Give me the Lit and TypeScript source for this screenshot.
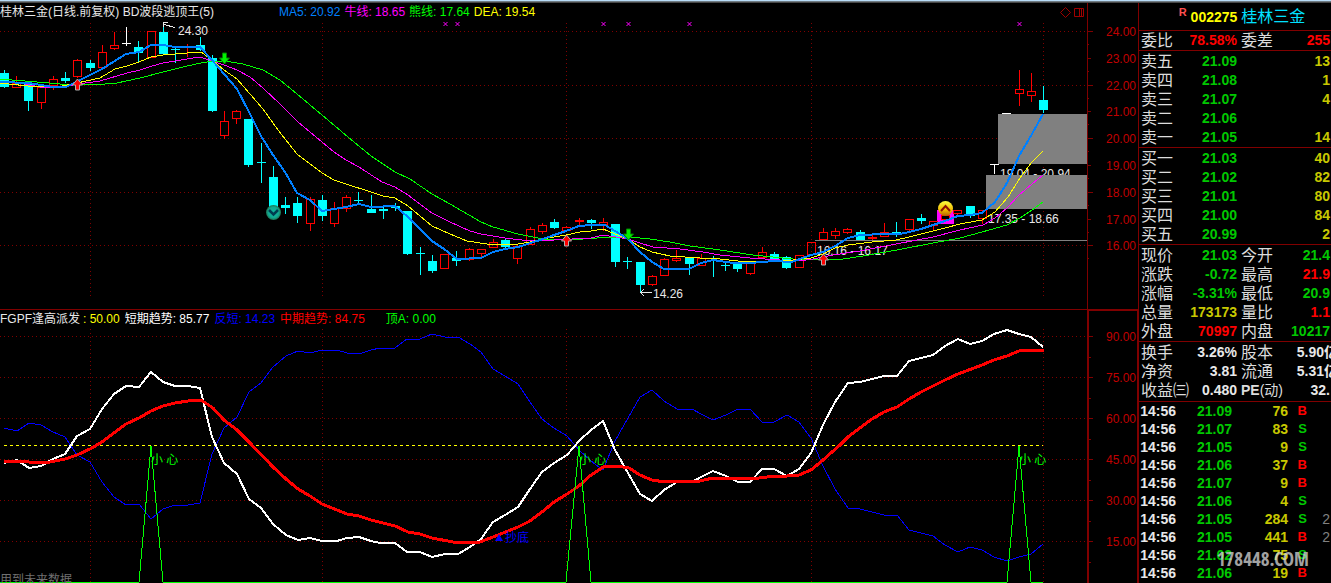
import { LitElement, html, svg, css } from "lit";
import { customElement } from "lit/decorators.js";

type Pt = [number, number];
// kind: u = hollow up bar, d = filled down bar, n = neutral bar
type Candle = [kind: "u" | "d" | "n", high: number, top: number, bottom: number, low: number];

const barX = (i: number) => Math.round(4 + 12.224 * i);
const pts = (list: Pt[]) => list.map((p) => p.join(",")).join(" ");

const parse = (s: string): Pt[] =>
  s.trim().split(/\s+/).map((p) => p.split(",").map(Number) as Pt);

const CANDLES: Candle[] = [
  ["d", 70, 73, 87, 88], ["u", 76, 83, 88, 88], ["d", 82, 84, 101, 111], ["u", 86, 87, 103, 109],
  ["u", 76, 79, 86, 90], ["d", 72, 78, 81, 83], ["u", 59, 60, 77, 78], ["d", 60, 63, 68, 71],
  ["u", 45, 52, 68, 69], ["u", 32, 45, 49, 50], ["n", 27, 43, 44, 46], ["d", 41, 47, 53, 63],
  ["u", 31, 31, 58, 58], ["d", 26, 32, 54, 54], ["d", 46, 49, 50, 63], ["u", 44, 47, 48, 57],
  ["d", 37, 45, 50, 51], ["d", 55, 58, 111, 112], ["u", 111, 121, 136, 139], ["u", 110, 111, 119, 124],
  ["d", 119, 119, 165, 167], ["d", 143, 162, 163, 183], ["d", 166, 177, 213, 213], ["d", 197, 205, 208, 214],
  ["d", 197, 203, 216, 223], ["u", 197, 199, 224, 231], ["d", 195, 200, 216, 221], ["u", 202, 208, 224, 227],
  ["u", 195, 197, 209, 212], ["d", 192, 200, 201, 204], ["d", 195, 209, 213, 213], ["d", 207, 209, 211, 219],
  ["d", 203, 206, 208, 211], ["d", 211, 211, 254, 255], ["d", 247, 253, 254, 275], ["d", 255, 261, 271, 273],
  ["u", 254, 254, 269, 269], ["d", 251, 258, 261, 266], ["u", 248, 249, 260, 261], ["u", 249, 249, 254, 257],
  ["u", 239, 242, 248, 248], ["d", 239, 240, 247, 248], ["u", 244, 246, 259, 264], ["u", 227, 229, 245, 245],
  ["u", 223, 225, 232, 234], ["d", 219, 222, 228, 229], ["u", 226, 227, 231, 231], ["u", 218, 220, 222, 226],
  ["d", 219, 220, 223, 229], ["u", 218, 222, 225, 231], ["d", 224, 224, 262, 267], ["d", 257, 261, 262, 269],
  ["d", 262, 262, 285, 293], ["u", 275, 276, 285, 286], ["u", 258, 259, 276, 276], ["u", 250, 258, 261, 262],
  ["d", 258, 258, 264, 275], ["u", 254, 258, 266, 266], ["d", 256, 260, 261, 277], ["d", 262, 265, 266, 271],
  ["d", 262, 264, 269, 272], ["u", 262, 262, 274, 275], ["u", 247, 252, 258, 258], ["d", 252, 254, 260, 260],
  ["d", 256, 257, 268, 269], ["u", 255, 255, 268, 268], ["u", 242, 242, 255, 255], ["u", 228, 232, 240, 240],
  ["u", 228, 231, 236, 239], ["u", 228, 229, 233, 234], ["d", 230, 232, 240, 240], ["u", 235, 237, 239, 240],
  ["u", 223, 232, 237, 237], ["d", 222, 232, 233, 237], ["u", 219, 219, 230, 232], ["d", 214, 218, 221, 224],
  ["u", 221, 221, 226, 231], ["u", 215, 215, 220, 220], ["u", 210, 210, 214, 216], ["d", 206, 206, 216, 218],
  ["u", 210, 210, 219, 224], ["n", 164, 164, 165, 174], ["n", 113, 113, 114, 114], ["u", 70, 89, 94, 106],
  ["u", 73, 91, 96, 102], ["d", 86, 100, 110, 113],
];

const MA_BLUE = parse(`0,82 29,83 53,87 66,87 78,81 102,69 126,54 139,52 151,45 163,45 175,47 200,47 212,60 237,89 249,112 261,136 273,155 285,172 297,193 310,200 322,211 334,209 346,207 359,204 371,207 395,206 408,217 432,241 444,249 457,259 481,258 493,252 505,249 518,247 540,240 554,235 566,231 579,226 591,225 605,225 615,231 628,239 640,252 652,262 664,269 689,269 701,263 713,260 720,261 733,263 750,263 774,261 792,262 800,259 811,255 823,252 835,246 848,238 860,235 884,234 900,234 909,232 921,229 933,225 945,221 958,216 970,215 982,213 995,202 1007,183 1019,156 1032,134 1043,114`);
const MA_YELLOW = parse(`0,83 37,87 62,86 77,83 100,78 115,69 127,66 139,62 151,57 163,55 187,53 201,52 212,60 224,70 237,79 250,94 263,109 278,130 297,154 322,173 334,180 346,184 371,192 383,196 395,198 408,206 432,226 450,234 467,241 487,244 518,244 530,242 542,239 566,235 580,232 591,231 603,229 615,234 628,239 640,247 652,252 670,256 700,258 720,259 747,262 793,260 811,258 823,254 835,248 848,245 872,242 896,240 909,237 933,231 945,228 960,224 982,220 995,212 1008,197 1020,178 1032,162 1043,151`);
const MA_PINK = parse(`0,81 20,83 40,87 63,87 78,84 100,81 127,73 140,70 152,66 163,63 187,59 200,57 212,61 224,65 237,70 250,77 263,88 280,104 298,122 322,142 334,152 346,160 359,167 382,182 395,187 408,195 432,213 450,222 470,231 481,234 505,238 530,241 554,240 591,238 603,235 628,239 640,243 653,247 680,249 703,252 720,255 750,258 780,260 800,261 813,259 833,255 860,251 896,244 933,237 960,230 983,225 995,218 1007,208 1018,196 1032,184 1043,175`);
const MA_GREEN = parse(`0,79 37,82 60,84 93,85 117,83 140,78 167,71 187,66 201,63 213,61 225,61 243,64 263,70 280,80 297,94 322,115 348,137 371,156 395,172 410,179 432,194 450,204 481,222 493,227 518,234 543,239 570,240 597,238 630,237 650,239 670,242 690,246 720,250 753,255 793,259 843,259 863,256 897,250 933,243 960,238 982,232 1007,225 1020,218 1032,210 1043,202`);

const SHORT_TREND = parse(`4,463 17,460 29,468 41,466 53,459 65,454 77,436 90,429 102,409 114,394 126,386 139,387 151,372 163,382 175,386 188,386 200,388 212,437 224,463 237,474 249,499 261,508 273,524 286,535 298,540 310,538 322,541 337,541 347,538 359,537 371,541 380,543 395,543 407,552 420,552 432,557 445,554 458,554 470,547 481,539 493,522 505,515 518,507 530,489 542,472 554,463 567,455 579,441 591,430 603,421 615,450 628,473 640,494 652,501 664,490 677,482 692,482 701,477 713,471 726,476 738,482 750,482 762,469 774,469 787,476 799,469 811,453 823,425 835,402 848,383 860,382 872,379 884,376 897,376 909,361 921,358 933,355 945,346 958,339 970,344 982,341 994,334 1007,330 1019,334 1031,337 1043,347`);
// The inverse series is the short trend mirrored about the level of 50.
const INVERSE = SHORT_TREND.map(([x, y]): Pt => [x, 891 - y]);
const MID_TREND = parse(`4,461 17,461 29,462 50,462 65,459 77,455 90,449 102,442 114,433 126,424 139,418 151,411 163,406 175,403 188,401 201,400 213,408 224,420 237,430 249,442 273,467 286,479 298,489 310,496 322,504 347,514 359,516 371,520 395,526 408,532 420,534 432,538 453,542 480,542 493,537 518,527 530,521 542,512 554,502 567,494 579,486 591,475 605,466 617,466 629,468 640,475 652,480 665,482 677,481 700,481 713,478 726,478 752,479 774,476 787,476 799,475 811,470 823,460 840,445 848,437 860,428 872,419 884,412 897,407 909,399 921,392 945,380 958,374 982,365 994,360 1007,356 1019,351 1030,350 1044,350`);
const PEAKS = parse(`0,582 139,582 151,446 163,582 566,582 579,446 591,582 1007,582 1019,446 1031,582 1043,582`);

const PRICE_AXIS = [24, 23, 22, 21, 20, 19, 18, 17, 16].map((v, i) => ({
  label: v.toFixed(2), y: Math.round(31 + i * 26.8), major: v % 2 === 0,
}));
const OSC_AXIS = [90, 75, 60, 45, 30, 15].map((v, i) => ({ label: v.toFixed(2), y: 336 + i * 41 }));
const MONTHS = [90, 322, 566, 811, 1043];

const candle = ([kind, high, top, bottom, low]: Candle, i: number) => {
  const x = barX(i);
  const flat = bottom - top <= 2;
  if (kind === "u" && !flat) {
    return svg`<g class="up">
      ${high < top ? svg`<path d="M${x + 0.5} ${high}V${top}"/>` : ""}
      ${low > bottom ? svg`<path d="M${x + 0.5} ${bottom}V${low}"/>` : ""}
      <rect x=${x - 3.5} y=${top + 0.5} width="8" height=${bottom - top - 1}/></g>`;
  }
  return svg`<g class=${kind === "u" ? "solid-up" : kind === "d" ? "down" : "neutral"}>
    <rect x=${x - 4} y=${top} width="9" height=${Math.max(1, bottom - top)}/>
    <rect x=${x} y=${high} width="1" height=${low - high}/></g>`;
};

const buyArrow = (x: number, y: number) => svg`
  <path class="buy" d="M${x + 0.5} ${y}l5 6h-3v5h-4v-5h-3z"/>`;
const sellArrow = (x: number, y: number) => svg`
  <path class="sell" d="M${x - 1.5} ${y}h4v5h3l-5 6l-5 -6h3z"/>`;
const cross = (x: number) => svg`<path class="cross" d="M${x - 1.5} 22l4 4M${x + 2.5} 22l-4 4"/>`;

@customElement("price-chart")
class PriceChart extends LitElement {
  static styles = css`
    :host { display: block; }
    svg { display: block; width: 100%; height: auto; }
    text { font: 12px "Liberation Sans", "Noto Sans CJK SC", sans-serif; fill: #e8e8e8; }
    .crisp { shape-rendering: crispEdges; }
    .grid { stroke: #800000; stroke-dasharray: 1 3; fill: none; }
    .frame { stroke: #800000; fill: none; }
    .axis { fill: #c00000; text-anchor: end; }
    .up { stroke: #ff0000; fill: none; }
    .solid-up { fill: #ff0000; }
    .down { fill: #00ffff; }
    .neutral { fill: #ffffff; }
    .zone { fill: #808080; }
    .ma { fill: none; stroke-width: 1; }
    .thick { stroke: #0080ff; stroke-width: 2; }
    .yellow { stroke: #ffff00; }
    .pink { stroke: #ff00ff; }
    .green { stroke: #00ff00; }
    .buy { fill: #ff0000; stroke: #b0b0b0; }
    .sell { fill: #00f000; stroke: #008000; }
    .cross { stroke: #ff00ff; }
    .pointer { stroke: #e8e8e8; fill: none; }
  `;

  render() {
    return html`<svg viewBox="0 3 1138 306" role="img" aria-label="日线">
      <defs>
        <radialGradient id="teal"><stop offset="0" stop-color="#10b8a0"/><stop offset="0.7" stop-color="#10a890"/><stop offset="1" stop-color="#207050"/></radialGradient>
        <linearGradient id="gold" x2="0" y2="1"><stop offset="0" stop-color="#ffff40"/><stop offset="0.6" stop-color="#f0b800"/><stop offset="1" stop-color="#b06000"/></linearGradient>
      </defs>
      <g class="crisp">
        ${PRICE_AXIS.filter((a) => a.major).map((a) => svg`<path class="grid" d="M0 ${a.y + 0.5}H1087"/>`)}
        ${MONTHS.map((x) => svg`<path class="grid" d="M${x + 0.5} 23V297"/>`)}
        <path class="frame" d="M1087.5 3V309"/>
        ${PRICE_AXIS.map((a) => svg`<path class="frame" d="M1088 ${a.y + 0.5}h${a.major ? 5 : 3}M1088 ${a.y + 13.5}h1"/>`)}
      </g>
      ${PRICE_AXIS.map((a) => svg`<text class="axis" x="1136" y=${a.y + 5}>${a.label}</text>`)}
      <text x="1000" y="178">19.04 - 20.94</text>
      <g class="crisp">
        <rect class="zone" x="998" y="114" width="89" height="50"/>
        <rect class="zone" x="986" y="175" width="101" height="34"/>
        <rect class="zone" x="815" y="240" width="272" height="1"/>
        <rect x="937" y="210" width="17" height="14" fill="#ff00ff"/>
        <rect x="941" y="215" width="8" height="5" fill="#000"/>
      </g>
      <text x="988" y="223">17.35 - 18.66</text>
      <text x="817" y="255">16.16 - 16.17</text>
      <text x="178" y="35">24.30</text>
      <text x="653" y="298">14.26</text>
      <g class="crisp">
        ${CANDLES.map(candle)}
        <polyline class="ma green" points=${pts(MA_GREEN)}/>
        <polyline class="ma pink" points=${pts(MA_PINK)}/>
        <polyline class="ma yellow" points=${pts(MA_YELLOW)}/>
        <polyline class="ma thick" points=${pts(MA_BLUE)}/>
        <path class="pointer" d="M175 27.5L164 24.5M168 22.5H163.5V27"/>
        <path class="pointer" d="M652 292.5H640M644 289L640.5 292.5L644 296"/>
      </g>
      ${[445, 457, 603, 628, 689, 1019].map(cross)}
      ${buyArrow(77, 79)} ${buyArrow(566, 235)} ${buyArrow(823, 254)}
      ${sellArrow(224, 53)} ${sellArrow(628, 229)}
      <circle cx="273.5" cy="212.5" r="7.5" fill="url(#teal)"/>
      <path d="M269 210l4.500 4.500l4.500 -4.500" fill="none" stroke="#003c50" stroke-width="2.500"/>
      <circle cx="945.5" cy="208.500" r="7.500" fill="url(#gold)"/>
      <path d="M941 211l4.500 -5l4.500 5" fill="none" stroke="#901000" stroke-width="2"/>
    </svg>`;
  }
}

@customElement("trend-chart")
class TrendChart extends LitElement {
  static styles = css`
    :host { display: block; }
    svg { display: block; width: 100%; height: auto; }
    text { font: 12px "Liberation Sans", "Noto Sans CJK SC", sans-serif; }
    .crisp { shape-rendering: crispEdges; fill: none; }
    .grid { stroke: #800000; stroke-dasharray: 1 3; }
    .frame { stroke: #800000; }
    .heavy { stroke: #800000; stroke-width: 2; }
    .axis { fill: #c00000; text-anchor: end; }
    .level { stroke: #ffff00; stroke-dasharray: 3 3; }
    .inverse { stroke: #0000ff; }
    .short { stroke: #ffffff; stroke-width: 2; }
    .mid { stroke: #ff0000; stroke-width: 3; }
    .peaks { stroke: #00ff00; }
    .warn { fill: #00ff00; }
    .dip { fill: #0000ff; }
    .note { fill: #707070; }
  `;

  render() {
    return html`<svg viewBox="0 310 1138 273" role="img" aria-label="FGPF逢高派发">
      <g class="crisp">
        ${OSC_AXIS.map((a) => svg`<path class="grid" d="M0 ${a.y + 0.5}H1087"/>`)}
        ${MONTHS.map((x) => svg`<path class="grid" d="M${x + 0.5} 329V583"/>`)}
        <path class="heavy" d="M1088 583V310"/>
        <path class="frame" d="M1087 310.5H1138M1137.5 310V583"/>
        ${OSC_AXIS.map((a) => svg`<path class="frame" d="M1089 ${a.y + 0.5}h4M1089 ${a.y + 21.5}h2"/>`)}
        <polyline class="inverse" points=${pts(INVERSE)}/>
        <path class="level" d="M4 445.5H1043"/>
      </g>
      ${OSC_AXIS.map((a) => svg`<text class="axis" x="1136" y=${a.y + 5}>${a.label}</text>`)}
      <g class="crisp">
        <polyline class="short" points=${pts(SHORT_TREND)}/>
        <polyline class="mid" points=${pts(MID_TREND)}/>
        <polyline class="peaks" points=${pts(PEAKS)}/>
      </g>
      ${[151, 579, 1019].map((x) => svg`<text class="warn" x=${x} y="464">小 心</text>`)}
      <path class="dip" d="M499 534l4 7h-8z"/>
      <text class="dip" x="505" y="542">抄底</text>
      <text class="note" x="0" y="584">用到未来数据</text>
    </svg>`;
  }
}

const SELL = [["卖五", "21.09", "13"], ["卖四", "21.08", "1"], ["卖三", "21.07", "4"], ["卖二", "21.06", ""], ["卖一", "21.05", "14"]];
const BUY = [["买一", "21.03", "40"], ["买二", "21.02", "82"], ["买三", "21.01", "80"], ["买四", "21.00", "84"], ["买五", "20.99", "2"]];
const STATS = [
  ["现价", "21.03", "g", "今开", "21.4", "g"],
  ["涨跌", "-0.72", "g", "最高", "21.9", "r"],
  ["涨幅", "-3.31%", "g", "最低", "20.9", "g"],
  ["总量", "173173", "y", "量比", "1.1", "r"],
  ["外盘", "70997", "r", "内盘", "10217", "g"],
];
const FUNDAMENTALS = [
  ["换手", "3.26%", "w", "股本", "5.90亿", "w long"],
  ["净资", "3.81", "w", "流通", "5.31亿", "w long"],
  ["收益㈢", "0.480", "w", "PE(动)", "32.", "w"],
];
const TICKS = [
  ["21.09", "76", "B", ""], ["21.07", "83", "S", ""], ["21.05", "9", "S", ""], ["21.06", "37", "B", ""],
  ["21.07", "9", "B", ""], ["21.06", "4", "S", ""], ["21.05", "284", "S", "2"], ["21.05", "441", "B", "2"],
  ["21.02", "75", "S", ""], ["21.06", "19", "B", ""],
];

@customElement("quote-panel")
class QuotePanel extends LitElement {
  static styles = css`
    :host {
      display: block; position: relative; overflow: hidden; color: #e8e8e8;
      border-left: 1px solid #800000;
      font: bold 14px/19px "Liberation Sans", "Noto Sans CJK SC", sans-serif;
    }
    .name {
      display: flex; justify-content: center; gap: 4px; height: 27px; line-height: 28px;
      margin: 0; font-size: 14px; padding-left: 14px; border-bottom: 1px solid #800000;
    }
    .flag { color: #ff5050; font: bold 11px/18px "Liberation Sans", sans-serif; }
    .code { color: #ffff00; }
    .title { color: #00e0ff; font-size: 16px; font-weight: 400; }
    table { width: 100%; table-layout: fixed; border-collapse: separate; border-spacing: 0; border-bottom: 1px solid #800000; }
    .book, .stats { padding-top: 1px; }
    .funds { padding: 1px 0; }
    .ticks { border: 0; }
    td, th { padding: 0; height: 19px; white-space: nowrap; text-align: right; }
    th { font-size: 16px; font-weight: 400; text-align: left; padding-left: 2px; color: #dcdcdc; }
    td + th { padding-left: 4px; }
    .mixed { font-size: 14px; font-weight: bold; }
    .mixed span { font-weight: 400; }
    .c1 { width: 35px; } .c2 { width: 63px; } .c3 { width: 37px; }
    .t1 { width: 37px; } .t2 { width: 56px; } .t3 { width: 56px; } .t4 { width: 19px; }
    .last { padding-right: 1px; }
    .long { position: relative; left: 8px; }
    .r { color: #ff0000; } .g { color: #00c800; } .y { color: #c8c800; } .w { color: #e8e8e8; } .dim { color: #808080; font-weight: normal; }
    .ticks td { height: 18px; line-height: 18px; }
    .side { font-weight: bold; font-size: 13px; }
    .mark {
      position: absolute; right: 22px; bottom: 12px; opacity: 0.75; color: #d8d8d8;
      font: bold 19px/24px "Liberation Sans Narrow", "Open Sans Condensed", "DejaVu Sans Condensed", sans-serif;
    }
  `;

  private pairRow = (r: string[]) => html`<tr>
    <th scope="row">${r[0]}</th><td class=${r[2]}>${r[1]}</td>
    ${r[3].startsWith("PE") ? html`<th scope="row" class="mixed">PE<span>(动)</span></th>` : html`<th scope="row">${r[3]}</th>`}
    <td class="last ${r[5]}">${r[4]}</td></tr>`;

  private book = (rows: string[][]) => html`<table class="book">
    <colgroup><col class="c1"><col class="c2"><col></colgroup>
    <tbody>${rows.map((r) => html`<tr><th scope="row">${r[0]}</th><td class="g">${r[1]}</td><td class="y last">${r[2]}</td></tr>`)}</tbody>
  </table>`;

  private pairs = (kind: string, rows: string[][]) => html`<table class=${kind}>
    <colgroup><col class="c1"><col class="c2"><col class="c3"><col></colgroup>
    <tbody>${rows.map(this.pairRow)}</tbody>
  </table>`;

  render() {
    return html`
      <h1 class="name"><span class="flag">R</span><span class="code">002275</span><span class="title">桂林三金</span></h1>
      ${this.pairs("ratio", [["委比", "78.58%", "r", "委差", "255", "r"]])}
      ${this.book(SELL)}
      ${this.book(BUY)}
      ${this.pairs("stats", STATS)}
      ${this.pairs("funds", FUNDAMENTALS)}
      <table class="ticks">
        <colgroup><col class="t1"><col class="t2"><col class="t3"><col class="t4"><col></colgroup>
        <tbody>${TICKS.map((t) => html`<tr>
          <td>14:56</td><td class="g">${t[0]}</td><td class="y">${t[1]}</td>
          <td class="side ${t[2] === "B" ? "r" : "g"}">${t[2]}</td><td class="dim last">${t[3]}</td></tr>`)}</tbody>
      </table>
      <div class="mark">178448.COM</div>`;
  }
}

@customElement("app-root")
class AppRoot extends LitElement {
  static styles = css`
    :host { display: block; background: #000; overflow: hidden; font: 12px/18px "Liberation Sans", "Noto Sans CJK SC", sans-serif; color: #e8e8e8; }
    .strip { height: 3px; background: linear-gradient(#b8dcf8 0 1px, #707c84 1px 2px, #484848 2px 3px); }
    .layout { display: grid; grid-template-columns: minmax(0, 1fr) 193px; }
    .pane { display: grid; border-bottom: 1px solid #800000; }
    .pane:last-child { border: 0; }
    .pane > * { grid-area: 1 / 1; }
    .legend { display: flex; align-items: center; align-self: start; height: 18px; gap: 5px; white-space: nowrap; z-index: 1; }
    .tight { gap: 4px; }
    .title { width: 275px; }
    .indicator { width: 78px; }
    .spaced { margin-left: 16px; }
    .tools { display: flex; gap: 3px; margin-left: auto; padding-right: 53px; }
    button { display: block; padding: 0; border: 0; background: none; height: 11px; }
    button svg { display: block; width: 11px; height: 11px; fill: none; stroke: #a00000; }
    .blue { color: #0080ff; } .pink { color: #ff00ff; } .green { color: #00ff00; } .yellow { color: #ffff00; }
    .navy { color: #0000ff; } .red { color: #ff0000; } .white { color: #ffffff; }
  `;

  render() {
    return html`
      <div class="strip"></div>
      <div class="layout">
        <main>
          <section class="pane">
            <price-chart></price-chart>
            <div class="legend tight">
              <span class="title">桂林三金(日线.前复权) BD波段逃顶王(5)</span>
              <span class="blue">MA5: 20.92</span>
              <span class="pink">牛线: 18.65</span>
              <span class="green">熊线: 17.64</span>
              <span class="yellow">DEA: 19.54</span>
              <span class="tools">
                <button aria-label="标记"><svg viewBox="0 0 11 11"><path d="M5.500 0.500l5 5l-5 5l-5 -5z"/></svg></button>
                <button aria-label="分栏"><svg viewBox="0 0 11 11"><path d="M0.500 1.500h9v8h-9zM5.500 1.500v8M7.500 1.500v8"/></svg></button>
              </span>
            </div>
          </section>
          <section class="pane">
            <trend-chart></trend-chart>
            <div class="legend">
              <span class="indicator">FGPF逢高派发</span>
              <span class="yellow">: 50.00</span>
              <span class="white">短期趋势: 85.77</span>
              <span class="navy">反短: 14.23</span>
              <span class="red">中期趋势: 84.75</span>
              <span class="green spaced">顶A: 0.00</span>
            </div>
          </section>
        </main>
        <quote-panel></quote-panel>
      </div>`;
  }
}
